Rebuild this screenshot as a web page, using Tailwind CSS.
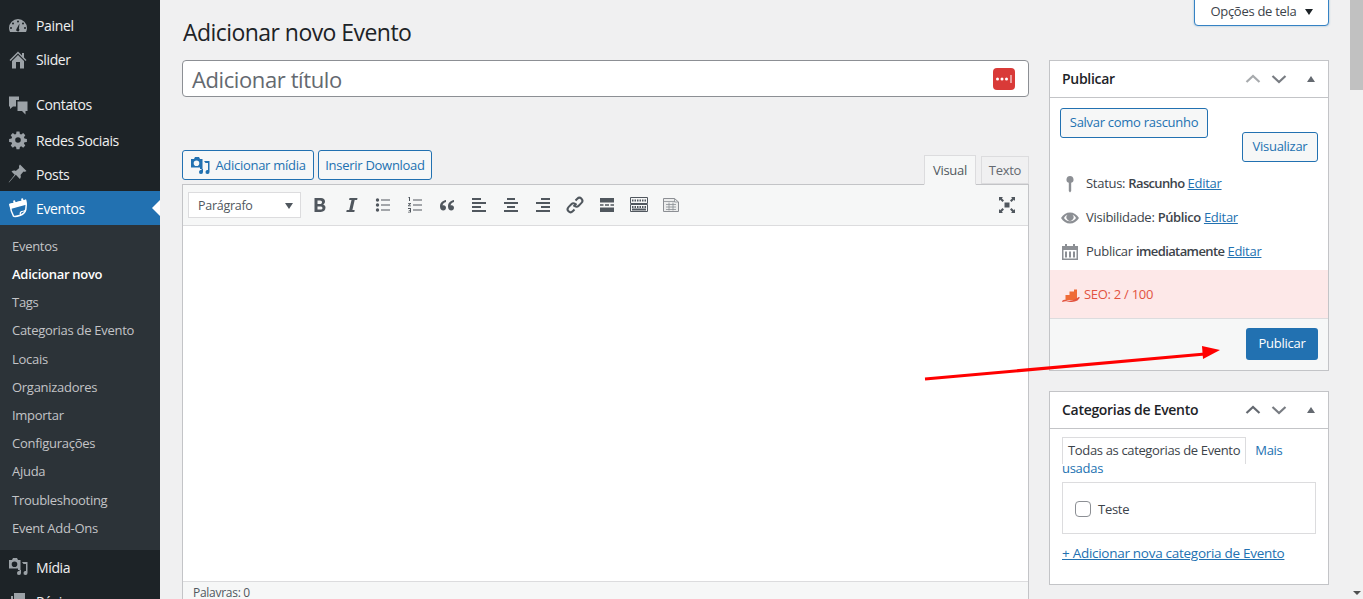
<!DOCTYPE html>
<html lang="pt-BR">
<head>
  <meta charset="UTF-8" />
  <title>Adicionar novo Evento</title>
  <script src="https://cdn.jsdelivr.net/npm/@tailwindcss/browser@4"></script>
</head>
<body class="bg-[#f0f0f1] text-[#3c434a] h-[599px] overflow-hidden flex font-['Open_Sans','Noto_Sans',sans-serif] text-[13px] tracking-[-0.28px] relative">

  <!-- Sidebar -->
  <nav class="w-[160px] h-[599px] shrink-0 bg-[#1d2327] text-[#f0f0f1] text-[14px] tracking-[-0.36px] pt-[9px] overflow-hidden">
    <a class="h-[34px] flex items-center gap-[8px] pl-[8px]">
      <svg class="w-[20px] h-[20px]" viewBox="0 0 20 20" fill="#9ca2a7"><path fill-rule="evenodd" d="M10 3a9 9 0 0 0-9 9c0 1.500.4 2.800 1 4h16c.6-1.200 1-2.500 1-4a9 9 0 0 0-9-9zm0 1.500a1 1 0 1 1 0 2 1 1 0 0 1 0-2zm-5 2a1 1 0 1 1 0 2 1 1 0 0 1 0-2zm10 0a1 1 0 1 1 0 2 1 1 0 0 1 0-2zM3 11a1 1 0 1 1 0 2 1 1 0 0 1 0-2zm14 0a1 1 0 1 1 0 2 1 1 0 0 1 0-2zm-5.500-3.500-.6 5.200a1.600 1.600 0 1 1-2.400.2z"/></svg>
      <span class="pb-[1px]">Painel</span>
    </a>
    <a class="h-[34px] flex items-center gap-[8px] pl-[8px]">
      <svg class="w-[20px] h-[20px]" viewBox="0 0 20 20" fill="#9ca2a7"><path fill-rule="evenodd" d="M10 1.500 1.500 10l1 1L10 3.500l7.500 7.500 1-1-2.500-2.500V3h-2v2.500z"/><path fill-rule="evenodd" d="M10 5 4 11v7.500h12V11zM8 12h4v6.500H8z"/></svg>
      <span class="pb-[1px]">Slider</span>
    </a>
    <div class="h-[11px]"></div>
    <a class="h-[34px] flex items-center gap-[8px] pl-[8px]">
      <svg class="w-[20px] h-[20px]" viewBox="0 0 20 20" fill="#9ca2a7"><path d="M1 1.500h10V5H8v6.500H5l-3 2.500v-2.500H1z"/><path d="M9.500 6.500H19.500V16h-2v3.500L14 16H9.500z"/></svg>
      <span class="pb-[1px]">Contatos</span>
    </a>
    <a class="h-[34px] flex items-center gap-[8px] pl-[8px] mt-[1px]">
      <svg class="w-[20px] h-[20px]" viewBox="0 0 20 20" fill="#9ca2a7"><path fill-rule="evenodd" d="M8.500 1.500h3l.4 2.400 1.300.6 2-1.400 2.100 2.100-1.400 2 .6 1.300 2.400.4v3l-2.400.4-.6 1.300 1.400 2-2.100 2.100-2-1.400-1.300.6-.4 2.400h-3l-.4-2.400-1.300-.6-2 1.400-2.100-2.100 1.400-2-.6-1.300-2.400-.4v-3l2.400-.4.6-1.300-1.400-2 2.100-2.100 2 1.400 1.300-.6zM10 7.200a2.800 2.800 0 1 0 0 5.600 2.800 2.800 0 0 0 0-5.600z"/></svg>
      <span>Redes Sociais</span>
    </a>
    <a class="h-[34px] flex items-center gap-[8px] pl-[8px]">
      <svg class="w-[20px] h-[20px]" viewBox="0 0 20 20" fill="#9ca2a7"><path d="M12 .5 18.500 7c-.8.800-2 .9-3 .4l-3 3.500c.6 1.400.4 2.900-.6 4L7.800 10.800 1 18.500l-.3-.3 6-7.400L3.500 7.500c1-1 2.900-1.200 4.300-.6l3.400-3c-.4-1-.2-2.600.8-3.400z"/></svg>
      <span>Posts</span>
    </a>
    <a class="h-[34px] flex items-center gap-[8px] pl-[8px] bg-[#2271b1] text-white relative">
      <svg class="w-[20px] h-[20px]" viewBox="0 0 20 20" fill="none" stroke="#fff" stroke-width="1.500"><path d="M2 6.500 17.500 2.500c.8 3 1 6.500.3 9-.5 2-2.800 4.800-5.300 5.800-2.500.8-5.800 1.500-7 .9C4 15.500 2.500 10.500 2 6.500z"/><path d="M2 6.500 17.500 2.500l.6 3.500L3 10z" fill="#fff"/><path d="M6 2.500l.8 3M14 .5l.8 3" stroke-width="2"/><path d="M12.500 17.300c-.5-1.500 0-3.300 1-3.800 1.500-.5 3 0 4-1.500" stroke-width="1.200"/></svg>
      <span>Eventos</span>
      <span class="absolute right-0 top-[9px] border-y-[8px] border-r-[8px] border-y-transparent border-r-white"></span>
    </a>
    <ul class="bg-[#2c3338] text-[#c3c4c7] text-[13px] tracking-[-0.28px] pt-[7.500px] pb-[7px] h-[325px]">
      <li class="h-[28.200px] flex items-center pl-[12px]">Eventos</li>
      <li class="h-[28.200px] flex items-center pl-[12px] text-white font-semibold">Adicionar novo</li>
      <li class="h-[28.200px] flex items-center pl-[12px]">Tags</li>
      <li class="h-[28.200px] flex items-center pl-[12px]">Categorias de Evento</li>
      <li class="h-[28.200px] flex items-center pl-[12px]">Locais</li>
      <li class="h-[28.200px] flex items-center pl-[12px]">Organizadores</li>
      <li class="h-[28.200px] flex items-center pl-[12px]">Importar</li>
      <li class="h-[28.200px] flex items-center pl-[12px]">Configurações</li>
      <li class="h-[28.200px] flex items-center pl-[12px]">Ajuda</li>
      <li class="h-[28.200px] flex items-center pl-[12px]">Troubleshooting</li>
      <li class="h-[28.200px] flex items-center pl-[12px]">Event Add-Ons</li>
    </ul>
    <a class="h-[34px] flex items-center gap-[8px] pl-[8px]">
      <svg class="w-[20px] h-[20px]" viewBox="0 0 20 20" fill="#9ca2a7"><path fill-rule="evenodd" d="M1 3h3l1-2h4l1 2h2.500v10H10v-1.500H1zm5.500 1.500a2.800 2.800 0 1 0 0 5.600 2.800 2.800 0 0 0 0-5.600z"/><path d="M14 5h5.500v11a2 2 0 1 1-1.500-1.900V7h-2.500z"/><path d="M13 16a2 2 0 1 1-1.500-1.900V13H13z"/></svg>
      <span>Mídia</span>
    </a>
    <a class="h-[34px] flex items-center gap-[8px] pl-[8px]">
      <svg class="w-[20px] h-[20px]" viewBox="0 0 20 20" fill="#9ca2a7"><path d="M6 2h11v13H6z"/><path d="M3 5h2v12h10v2H3z"/></svg>
      <span>Páginas</span>
    </a>
  </nav>

  <!-- Main -->
  <main class="flex-1 min-w-0 pl-[22px] pr-[21px] flex gap-[20px] items-start">
    <!-- Editor column -->
    <div class="w-[847px] shrink-0">
      <h1 class="text-[23px] leading-[29px] tracking-[-0.55px] text-[#1d2327] pl-[1px] pt-[18px] pb-[13px]">Adicionar novo Evento</h1>
      <div class="h-[37px] bg-white border border-[#8c8f94] rounded-[4px] flex items-center justify-between pl-[9px] pr-[13px]">
        <span class="text-[22px] tracking-[-0.4px] leading-[37px] pt-[2px] text-[#646970]">Adicionar título</span>
        <svg class="w-[22px] h-[22px]" viewBox="0 0 22 22"><rect width="22" height="22" rx="4" fill="#d93a38"/><circle cx="4.500" cy="11" r="1.500" fill="#fff"/><circle cx="9" cy="11" r="1.500" fill="#fff"/><circle cx="13.500" cy="11" r="1.500" fill="#fff"/><rect x="17.500" y="7" width="1" height="8" fill="#fff"/></svg>
      </div>

      <div class="flex items-end justify-between mt-[53px] h-[34px]">
        <div class="flex gap-[4px] mb-[4px]">
          <button class="h-[30px] w-[132px] pt-[1px] border border-[#2271b1] rounded-[3px] bg-[#f6f7f7] text-[#2271b1] flex items-center justify-center gap-[5px]">
            <svg class="w-[20px] h-[20px] shrink-0" viewBox="0 0 20 20" fill="#2271b1"><path fill-rule="evenodd" d="M1 3h3l1-2h4l1 2h2.500v10H10v-1.500H1zm5.500 1.500a2.800 2.800 0 1 0 0 5.600 2.800 2.800 0 0 0 0-5.600z"/><path d="M14 5h5.500v11a2 2 0 1 1-1.500-1.900V7h-2.500z"/><path d="M13 16a2 2 0 1 1-1.500-1.900V13H13z"/></svg>
            Adicionar mídia
          </button>
          <button class="h-[30px] w-[114px] pt-[1px] border border-[#2271b1] rounded-[3px] bg-[#f6f7f7] text-[#2271b1]">Inserir Download</button>
        </div>
        <div class="flex gap-[5px] relative top-[1px] z-10">
          <div class="h-[30px] w-[52px] pt-[2px] border border-[#dcdcde] border-b-[#f6f7f7] bg-[#f6f7f7] flex items-center justify-center text-[#50575e]">Visual</div>
          <div class="h-[28px] w-[48px] mt-[1px] pt-[1px] border border-[#dcdcde] bg-[#f0f0f1] flex items-center justify-center text-[#646970]">Texto</div>
        </div>
      </div>

      <div class="border border-[#c3c4c7] h-[420px] bg-white">
        <div class="h-[41px] bg-[#f6f7f7] border-b border-[#dcdcde] flex items-center pl-[5px] pr-[11px]">
          <div class="w-[113px] h-[26px] bg-white border border-[#dcdcde] flex items-center justify-between pl-[9px] pr-[7px] pt-[2px] text-[#50575e] text-[12.500px]">
            <span>Parágrafo</span>
            <span class="border-x-[4.500px] border-t-[6px] border-x-transparent border-t-[#50575e]"></span>
          </div>
          <div class="flex items-center ml-[3px]">
            <span class="w-[32px] h-[24px] flex items-center justify-center">
              <svg class="w-[20px] h-[20px]" viewBox="0 0 20 20" fill="#50575e"><path fill-rule="evenodd" d="M5 3h6.500c2.500 0 4 1.300 4 3.500 0 1.300-.7 2.400-1.900 2.900 1.500.4 2.400 1.600 2.400 3.200 0 2.700-1.800 4.400-4.700 4.400H5zm3 2.400V9h2.500c1.300 0 2-.7 2-1.800S11.800 5.400 10.500 5.400zm0 6v3.200h2.800c1.400 0 2.200-.6 2.200-1.600s-.8-1.600-2.200-1.600z" transform="translate(-.5 0)"/></svg>
            </span>
            <span class="w-[31px] h-[24px] flex items-center justify-center">
              <svg class="w-[20px] h-[20px]" viewBox="0 0 20 20" fill="#50575e"><path d="M7.500 3h8l-.4 2h-2.400l-2.300 10h2.300l-.4 2h-8l.4-2h2.500L9.500 5H7.100z"/></svg>
            </span>
            <span class="w-[32px] h-[24px] flex items-center justify-center">
              <svg class="w-[20px] h-[20px]" viewBox="0 0 20 20" fill="#50575e"><circle cx="4.500" cy="5" r="1.700"/><circle cx="4.500" cy="10" r="1.700"/><circle cx="4.500" cy="15" r="1.700"/><path d="M8 4.500h9v1H8zm0 5h9v1H8zm0 5h9v1H8z"/></svg>
            </span>
            <span class="w-[32px] h-[24px] flex items-center justify-center">
              <svg class="w-[20px] h-[20px]" viewBox="0 0 20 20" fill="#50575e"><path d="M8 4.500h9v1H8zm0 5h9v1H8zm0 5h9v1H8z"/><path d="M4 2h1v4H4V3H3zM3 8h3v.800L4.200 10.500H6v.800H3v-.800L4.800 8.800H3zm0 5h3v4.500H3v-.800h2v-1H3.800v-.800H5v-1H3z"/></svg>
            </span>
            <span class="w-[32px] h-[24px] flex items-center justify-center">
              <svg class="w-[20px] h-[20px]" viewBox="0 0 20 20" fill="#50575e"><path d="M9 5C6 5.500 3 7.500 3 11.500 3 14 4.500 15.500 6.300 15.500c1.600 0 2.700-1.200 2.700-2.700s-1-2.500-2.500-2.500c-.5 0-.8.100-1 .2.300-1.700 1.600-3 3.500-3.500zm8 0c-3 .5-6 2.500-6 6.500 0 2.500 1.500 4 3.300 4 1.600 0 2.700-1.200 2.700-2.700s-1-2.500-2.500-2.500c-.5 0-.8.100-1 .2.300-1.700 1.600-3 3.500-3.500z"/></svg>
            </span>
            <span class="w-[32px] h-[24px] flex items-center justify-center">
              <svg class="w-[20px] h-[20px]" viewBox="0 0 20 20" fill="#50575e"><path d="M3 3h9v2H3zm0 4h14v2H3zm0 4h9v2H3zm0 4h14v2H3z"/></svg>
            </span>
            <span class="w-[32px] h-[24px] flex items-center justify-center">
              <svg class="w-[20px] h-[20px]" viewBox="0 0 20 20" fill="#50575e"><path d="M6 3h8v2H6zM3 7h14v2H3zm3 4h8v2H6zm-3 4h14v2H3z"/></svg>
            </span>
            <span class="w-[32px] h-[24px] flex items-center justify-center">
              <svg class="w-[20px] h-[20px]" viewBox="0 0 20 20" fill="#50575e"><path d="M8 3h9v2H8zM3 7h14v2H3zm5 4h9v2H8zm-5 4h14v2H3z"/></svg>
            </span>
            <span class="w-[32px] h-[24px] flex items-center justify-center">
              <svg class="w-[20px] h-[20px]" viewBox="0 0 20 20" fill="none" stroke="#50575e" stroke-width="2"><path d="M8.500 11.500l3-3"/><path d="M10.500 5.500l1.800-1.800a3 3 0 0 1 4.200 0 3 3 0 0 1 0 4.200l-2.800 2.800a3 3 0 0 1-4 .2"/><path d="M9.500 14.500l-1.800 1.800a3 3 0 0 1-4.200 0 3 3 0 0 1 0-4.200l2.800-2.800a3 3 0 0 1 4-.2"/></svg>
            </span>
            <span class="w-[32px] h-[24px] flex items-center justify-center">
              <svg class="w-[20px] h-[20px]" viewBox="0 0 20 20" fill="#50575e"><path d="M3 3h14v4.500H3zm0 9.500h14V17H3zM3 9.300h3.500v1.400H3zm5 0h4v1.400H8zm5.500 0H17v1.400h-3.500z"/></svg>
            </span>
            <span class="w-[32px] h-[24px] flex items-center justify-center">
              <svg class="w-[20px] h-[20px]" viewBox="0 0 20 20" fill="none" stroke="#50575e"><path d="M1.500 2.500h17v6h-17zm0 7h17v7h-17z"/><path stroke-width="2" stroke-dasharray="1.500 1" d="M3 5.500h14M3 12h14"/><path stroke-width="2" d="M3 14.500h14"/></svg>
            </span>
            <span class="w-[32px] h-[24px] flex items-center justify-center">
              <svg class="w-[20px] h-[20px]" viewBox="0 0 20 20" fill="#eceded" stroke="#8c8f94"><path d="M2.500 3.500h11l4 3.500v9.500h-15z"/><path d="M13.500 3.500V7h4M2.500 6.500h11M5 9.500h10M5 12h10M5 14.500h10M8 7.500v8M12 7.500v8" fill="none" stroke-width=".8"/></svg>
            </span>
          </div>
          <svg class="w-[20px] h-[20px] ml-auto" viewBox="0 0 20 20" fill="#50575e"><path d="M7.500 7.500h5v5h-5z"/><path d="M2 2h4L4.800 3.200 7 5.500 5.500 7 3.200 4.800 2 6zm16 0v4l-1.200-1.200L14.500 7 13 5.500l2.200-2.300L14 2zM2 18v-4l1.200 1.200L5.500 13 7 14.500l-2.200 2.300L6 18zm16 0h-4l1.200-1.200L13 14.500l1.500-1.500 2.300 2.200L18 14z"/></svg>
        </div>
        <div class="h-[355px] bg-white"></div>
        <div class="h-[22px] border-t border-[#dcdcde] bg-[#f6f7f7] pl-[10px] text-[12px] leading-[22px] text-[#50575e]">Palavras: 0</div>
      </div>
    </div>

    <!-- Side column -->
    <aside class="w-[280px] shrink-0 pt-[60px]">
      <section class="bg-white border border-[#c3c4c7] h-[311px] mb-[20px] flex flex-col">
        <header class="h-[37px] shrink-0 border-b border-[#c3c4c7] flex items-center px-[12px] text-[14px] tracking-[-0.3px] font-semibold text-[#1d2327]">
          <span class="flex-1 pb-[1px]">Publicar</span>
          <svg class="w-[16px] h-[16px] mr-[10px]" viewBox="0 0 16 16" fill="none" stroke="#a7aaad" stroke-width="2.200"><path d="M1.500 11 8 5l6.500 6"/></svg>
          <svg class="w-[16px] h-[16px] mr-[20px]" viewBox="0 0 16 16" fill="none" stroke="#787c82" stroke-width="2.200"><path d="M1.500 5 8 11l6.500-6"/></svg>
          <span class="border-x-[4.500px] border-b-[6px] border-x-transparent border-b-[#646970] mr-[1px]"></span>
        </header>
        <div class="h-[172px] shrink-0">
          <div class="flex items-start justify-between px-[10px] pt-[10px] h-[69px]">
            <button class="h-[30px] w-[148px] border border-[#2271b1] rounded-[3px] bg-[#f6f7f7] text-[#2271b1]">Salvar como rascunho</button>
            <button class="h-[30px] w-[76px] mt-[24px] border border-[#2271b1] rounded-[3px] bg-[#f6f7f7] text-[#2271b1]">Visualizar</button>
          </div>
          <div class="h-[34px] flex items-center pl-[10px] gap-[6px]">
            <svg class="w-[20px] h-[20px]" viewBox="0 0 20 20" fill="#8c8f94"><path fill-rule="evenodd" d="M10 2a3.500 3.500 0 0 1 1.200 6.800V17l-1.200 1.500L8.800 17V8.800A3.500 3.500 0 0 1 10 2z"/></svg>
            <span>Status: <b class="font-semibold tracking-[-0.65px]">Rascunho</b> <a class="text-[#2271b1] underline">Editar</a></span>
          </div>
          <div class="h-[34px] flex items-center pl-[10px] gap-[6px]">
            <svg class="w-[20px] h-[20px]" viewBox="0 0 20 20" fill="#8c8f94"><path fill-rule="evenodd" d="M1 10c2-3.500 5.500-5.500 9-5.500s7 2 9 5.500c-2 3.500-5.500 5.500-9 5.500S3 13.500 1 10zm3 0c1.200 1.800 3 3.200 6 3.200s4.800-1.400 6-3.200c-1-1.700-2.400-2.900-3.500-3.200a3.500 3.500 0 1 1-5 0C6.400 7.100 5 8.300 4 10z"/></svg>
            <span>Visibilidade: <b class="font-semibold tracking-[-0.4px]">Público</b> <a class="text-[#2271b1] underline">Editar</a></span>
          </div>
          <div class="h-[34px] flex items-center pl-[10px] gap-[6px]">
            <svg class="w-[20px] h-[20px]" viewBox="0 0 20 20" fill="#8c8f94"><path fill-rule="evenodd" d="M2 4h3V2h2v2h6V2h2v2h3v14H2zm1.500 4v8.500h13V8zM5 9.500h2v6H5zm4 0h2v6H9zm4 0h2v6h-2z"/></svg>
            <span>Publicar <b class="font-semibold tracking-[-0.6px]">imediatamente</b> <a class="text-[#2271b1] underline">Editar</a></span>
          </div>
        </div>
        <div class="h-[48px] shrink-0 bg-[#fde8e8] flex items-center pl-[12px] pt-[2px] gap-[4px] text-[#e2533f]">
          <svg class="w-[18px] h-[13px]" viewBox="0 0 18 13"><path d="M3.500 11V6h4v5zm4 0V2.500h4.500V11zm4.500 0V.5h3V11z" fill="#ef6b36"/><path d="M0 12c1.500-1.200 2.500-1.500 4-1 2 .8 4 .8 6.500.2 2-.5 4-1.500 6-3.200l1.500.5-2.500 3c-3 1.500-7 2-10 1-1.500-.5-3-.5-5 .5z" fill="#e2533f"/></svg>
          <span>SEO: 2 / 100</span>
        </div>
        <div class="flex-1 bg-[#f6f7f7] border-t border-[#dcdcde] flex items-start justify-end pt-[9px] pr-[10px]">
          <button class="h-[32px] w-[72px] bg-[#2271b1] rounded-[3px] text-white">Publicar</button>
        </div>
      </section>

      <section class="bg-white border border-[#c3c4c7] h-[194px]">
        <header class="h-[37px] border-b border-[#c3c4c7] flex items-center px-[12px] text-[14px] tracking-[-0.3px] font-semibold text-[#1d2327]">
          <span class="flex-1 pb-[1px]">Categorias de Evento</span>
          <svg class="w-[16px] h-[16px] mr-[10px]" viewBox="0 0 16 16" fill="none" stroke="#646970" stroke-width="2.200"><path d="M1.500 11 8 5l6.500 6"/></svg>
          <svg class="w-[16px] h-[16px] mr-[20px]" viewBox="0 0 16 16" fill="none" stroke="#787c82" stroke-width="2.200"><path d="M1.500 5 8 11l6.500-6"/></svg>
          <span class="border-x-[4.500px] border-b-[6px] border-x-transparent border-b-[#646970] mr-[1px]"></span>
        </header>
        <div class="px-[12px] pt-[8px]">
          <div class="leading-[18px] text-[#2271b1]">
            <span class="inline-block border-x border-t border-[#dcdcde] text-[#3c434a] tracking-[-0.35px] px-[5px] pt-[3px] h-[27px] -mb-[5px] mr-[6px]">Todas as categorias de Evento</span>
            <span>Mais usadas</span>
          </div>
          <div class="border border-[#dcdcde] h-[52px] mt-[5px] flex items-center pl-[12px] pt-[2px] gap-[7px]">
            <span class="w-[16px] h-[16px] border border-[#8c8f94] rounded-[4px] bg-white"></span>
            <span class="pt-[1px]">Teste</span>
          </div>
          <a class="block mt-[9px] text-[13.500px] text-[#2271b1] underline font-medium">+ Adicionar nova categoria de Evento</a>
        </div>
      </section>
    </aside>
  </main>

  <!-- Scrollbar -->
  <div class="w-[13px] h-[599px] shrink-0 bg-[#f1f1f1] relative">
    <div class="h-[90px] bg-[#c1c1c1]"></div>
    <span class="absolute left-[3px] bottom-[4px] border-x-[4px] border-t-[4px] border-x-transparent border-t-[#505050]"></span>
  </div>

  <!-- Screen options tab -->
  <button class="absolute left-[1194px] top-[-4px] w-[135px] h-[30px] pt-[2px] bg-white border border-[#3582c4] rounded-b-[4px] shadow-[0_0_2px_rgba(34,113,177,0.5)] text-[#3c434a] flex items-center justify-center gap-[8px]">
    Opções de tela
    <span class="border-x-[4.500px] border-t-[6px] border-x-transparent border-t-[#1d2327]"></span>
  </button>

  <!-- Red annotation arrow -->
  <svg class="absolute left-[920px] top-[340px] pointer-events-none" width="310" height="45" viewBox="0 0 310 45">
    <path d="M5 39 285 14" stroke="#ff0000" stroke-width="3"/>
    <path d="M300 10 282 6l1 13z" fill="#ff0000"/>
  </svg>
</body>
</html>
